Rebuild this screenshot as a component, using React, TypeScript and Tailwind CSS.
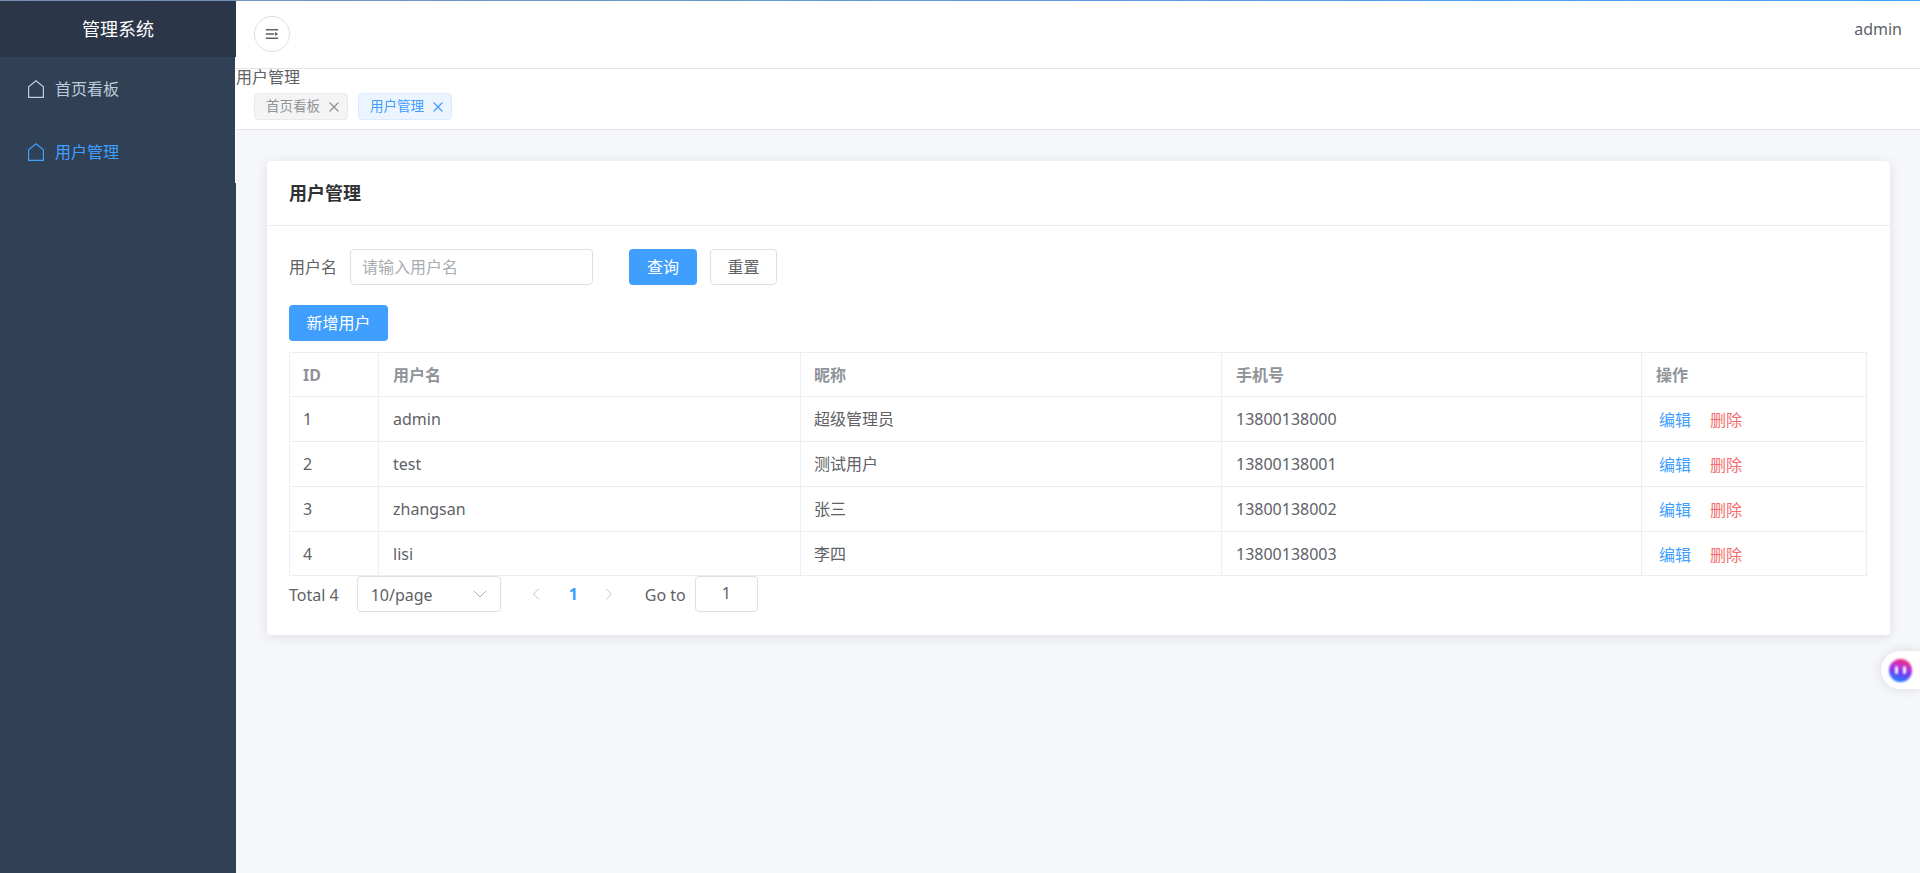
import { ChevronDown, ChevronLeft, ChevronRight, X } from 'lucide-react'

const users = [
  { id: 1, username: 'admin', nickname: '超级管理员', phone: '13800138000' },
  { id: 2, username: 'test', nickname: '测试用户', phone: '13800138001' },
  { id: 3, username: 'zhangsan', nickname: '张三', phone: '13800138002' },
  { id: 4, username: 'lisi', nickname: '李四', phone: '13800138003' },
]

const HomeIcon = ({ className }: { className: string }) => (
  <svg viewBox="0 0 16 18" fill="none" stroke="currentColor" strokeWidth="1.2" className={className}>
    <path d="M0.6 17.4V6.9L8 0.8l7.4 6.1v10.5z" />
  </svg>
)

const MenuItem = ({ label, active = false }: { label: string; active?: boolean }) => (
  <div className={`flex h-[63px] items-center pl-[28px] ${active ? 'text-[#409eff]' : 'text-[#bfcbd9]'}`}>
    <HomeIcon className="mr-[11px] h-[18px] w-[16px]" />
    <span>{label}</span>
  </div>
)

const Tag = ({ label, active = false }: { label: string; active?: boolean }) => (
  <div className={`flex h-[27px] items-center rounded-[4px] border pl-[11px] pr-[5px] text-[13.5px] ${active ? 'border-[#d9ecff] bg-[#ecf5ff] text-[#409eff]' : 'border-[#e9e9eb] bg-[#f4f4f5] text-[#909399]'}`}>
    <span>{label}</span>
    <X className="ml-[6px] h-4 w-4" strokeWidth={1.8} />
  </div>
)

export default function App() {
  return (
    <div className="flex h-screen overflow-hidden bg-[#f6f7fb] font-['Noto_Sans','Noto_Sans_CJK_SC',sans-serif] text-base text-[#606266]">
      <aside className="flex w-[236px] shrink-0 flex-col bg-[#304156]">
        <div className="flex h-[57px] shrink-0 items-center justify-center bg-[#2b3649] text-lg text-white">管理系统</div>
        <div className="w-[235px]">
          <MenuItem label="首页看板" />
          <MenuItem label="用户管理" active />
        </div>
      </aside>

      <main className="relative flex min-w-0 flex-1 flex-col">
        <header className="flex h-[69px] shrink-0 items-start justify-between border-b border-[#e6e6e6] bg-white pl-[18px] pr-[18px] pt-[16px]">
          <button className="flex h-9 w-9 items-center justify-center rounded-full border border-[#dcdfe6] text-[#606266]">
            <svg viewBox="0 0 14 14" className="h-[14px] w-[14px]" fill="currentColor">
              <path d="M.8 2h12.4v1.6H.8zM.8 6.2h8.4v1.6H.8zM.8 10.4h12.4V12H.8zM10 4.9 13.2 7 10 9.1z" />
            </svg>
          </button>
          <span className="pt-[1px]">admin</span>
        </header>

        <div className="h-[61px] shrink-0 border-b border-[#e6e6e6] bg-white">
          <div className="leading-[17px]">用户管理</div>
          <div className="flex gap-[10px] pl-[18px] pt-[7px]">
            <Tag label="首页看板" />
            <Tag label="用户管理" active />
          </div>
        </div>

        <div className="flex-1 px-[31px] pt-[31px]">
          <section className="w-[1623px] rounded-[4px] bg-white shadow-[0_2px_12px_0_rgba(0,0,0,0.1)]">
            <div className="flex h-[65px] items-center border-b border-[#ebeef5] px-[22px] text-lg font-bold text-[#303133]">用户管理</div>
            <div className="px-[22px] pb-[23px] pt-[23px]">
              <div className="flex items-center">
                <span className="mr-[13px]">用户名</span>
                <div className="flex h-9 w-[243px] items-center rounded-[4px] border border-[#dcdfe6] px-[11px] text-[#a8abb2]">请输入用户名</div>
                <button className="ml-[36px] h-9 w-[68px] rounded-[4px] bg-[#409eff] text-white">查询</button>
                <button className="ml-[13px] h-9 w-[67px] rounded-[4px] border border-[#dcdfe6] bg-white">重置</button>
              </div>
              <button className="mt-[20px] block h-9 w-[99px] rounded-[4px] bg-[#409eff] text-white">新增用户</button>

              <table className="mt-[11px] w-[1577px] table-fixed border-collapse">
                <colgroup>
                  <col className="w-[89px]" />
                  <col className="w-[422px]" />
                  <col className="w-[421px]" />
                  <col className="w-[420px]" />
                  <col className="w-[225px]" />
                </colgroup>
                <thead>
                  <tr className="h-[44px] text-left font-bold text-[#909399]">
                    <th className="border border-[#ebeef5] px-[13px]">ID</th>
                    <th className="border border-[#ebeef5] px-[14px]">用户名</th>
                    <th className="border border-[#ebeef5] px-[13px]">昵称</th>
                    <th className="border border-[#ebeef5] px-[14px]">手机号</th>
                    <th className="border border-[#ebeef5] px-[14px]">操作</th>
                  </tr>
                </thead>
                <tbody>
                  {users.map((user) => (
                    <tr key={user.id} className={user.id === 4 ? 'h-[44px]' : 'h-[45px]'}>
                      <td className="border border-[#ebeef5] px-[13px]">{user.id}</td>
                      <td className="border border-[#ebeef5] px-[14px]">{user.username}</td>
                      <td className="border border-[#ebeef5] px-[13px]">{user.nickname}</td>
                      <td className="border border-[#ebeef5] px-[14px]">{user.phone}</td>
                      <td className="border border-[#ebeef5] pl-[17px] pt-[2px]">
                        <span className="text-[#409eff]">编辑</span>
                        <span className="ml-[19px] text-[#f56c6c]">删除</span>
                      </td>
                    </tr>
                  ))}
                </tbody>
              </table>

              <div className="flex h-9 items-center">
                <span className="pt-[1px]">Total 4</span>
                <div className="ml-[18px] flex h-9 w-[144px] items-center justify-between rounded-[4px] border border-[#dcdfe6] pl-[13px] pr-[8px]">
                  <span className="pt-[1px]">10/page</span>
                  <ChevronDown className="h-6 w-6 text-[#a8abb2]" strokeWidth={0.9} />
                </div>
                <ChevronLeft className="ml-[25px] h-5 w-5 text-[#c0c4cc]" strokeWidth={1.2} />
                <span className="ml-[23px] font-bold text-[#409eff]">1</span>
                <ChevronRight className="ml-[21px] h-5 w-5 text-[#c0c4cc]" strokeWidth={1.2} />
                <span className="ml-[26px] pt-[1px]">Go to</span>
                <div className="ml-[9px] flex h-9 w-[63px] items-center justify-center rounded-[4px] border border-[#dcdfe6] pb-[2px]">1</div>
              </div>
            </div>
          </section>
        </div>

        <div className="absolute right-0 top-[651px] flex h-[38px] w-[39px] items-center rounded-l-full bg-white pl-[8px] shadow-[0_0_12px_rgba(0,0,0,0.12)]">
          <div className="flex h-[23px] w-[23px] items-center justify-center gap-[5px] rounded-full bg-[linear-gradient(195deg,#ff2d55_0%,#c030d0_35%,#7a35f0_55%,#1e80ff_90%)] blur-[0.8px]">
            <span className="h-[8px] w-[3px] rounded-full bg-white" />
            <span className="h-[8px] w-[3px] rounded-full bg-white" />
          </div>
        </div>
      </main>

      <div className="absolute left-0 top-0 h-px w-full bg-[linear-gradient(90deg,#7b8fb0,#409eff)]" />
      <div className="absolute left-[235px] top-[57px] h-[126px] w-px bg-white" />
    </div>
  )
}
